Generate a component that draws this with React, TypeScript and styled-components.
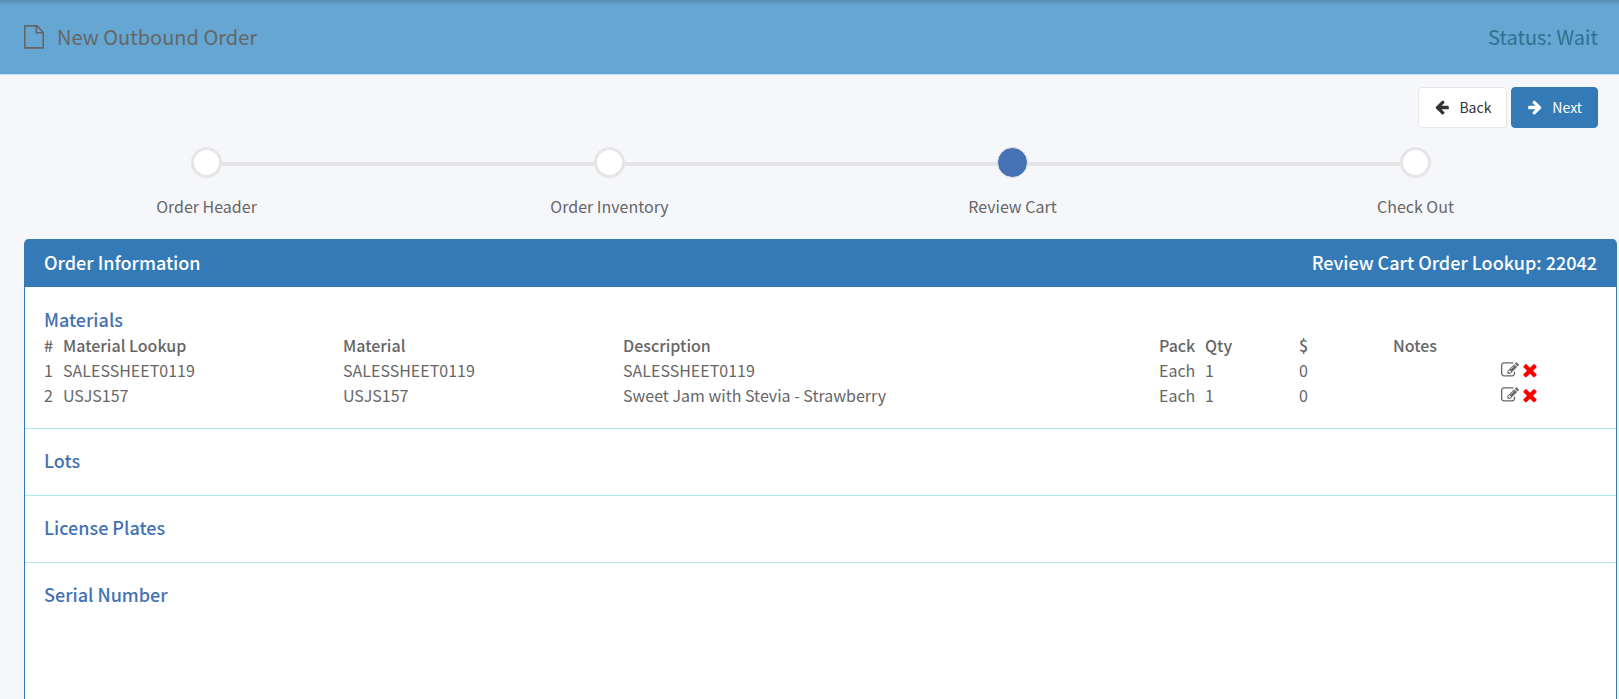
import React from 'react';
import styled, { createGlobalStyle } from 'styled-components';

const GlobalStyle = createGlobalStyle`
  * {
    box-sizing: border-box;
  }
  body {
    margin: 0;
    background: #f5f7fb;
    color: #666;
    font-family: 'Noto Sans CJK SC', 'Noto Sans', sans-serif;
    font-size: 16px;
    line-height: 25px;
  }
`;

const Page = styled.div`
  display: flex;
  flex-direction: column;
  min-height: 100vh;
  overflow: hidden;
`;

const Header = styled.header`
  display: flex;
  align-items: center;
  justify-content: space-between;
  padding: 22px 21px 22px 24px;
  background: #65a6d3;
  border-bottom: 1px solid #c8dcea;
  box-shadow: inset 0 6px 4px -4px rgba(0, 0, 0, 0.2);
`;

const Title = styled.h1`
  display: flex;
  align-items: center;
  gap: 13px;
  margin: 0;
  font-size: 20px;
  line-height: 30px;
  font-weight: 400;
`;

const Status = styled.p`
  margin: 0;
  font-size: 20px;
  line-height: 30px;
  color: #31708f;
`;

const Actions = styled.div`
  display: flex;
  justify-content: flex-end;
  gap: 4px;
  padding: 12px 21px 0 24px;
`;

const Button = styled.button<{ $primary?: boolean }>`
  display: flex;
  align-items: center;
  gap: 9px;
  padding: 9px 15px 10px;
  border: 1px solid ${(p) => (p.$primary ? '#337ab7' : '#e7e7e7')};
  border-radius: 4px;
  background: ${(p) => (p.$primary ? '#337ab7' : '#fff')};
  color: ${(p) => (p.$primary ? '#fff' : '#333')};
  font-family: inherit;
  font-size: 14px;
  line-height: 20px;
  cursor: pointer;
`;

const Steps = styled.ol`
  display: grid;
  grid-template-columns: repeat(4, 1fr);
  margin: 0;
  padding: 19px 2px 0 5px;
  list-style: none;
`;

const Step = styled.li`
  display: flex;
  flex-direction: column;
  gap: 16px;
  text-align: center;
`;

const Track = styled.div`
  display: flex;
  align-items: center;
`;

const Rail = styled.span<{ $hidden: boolean }>`
  flex: 1;
  height: 4px;
  margin-top: 2px;
  background: ${(p) => (p.$hidden ? 'transparent' : '#e5e5e5')};
`;

const Dot = styled.span<{ $active: boolean }>`
  width: 31px;
  height: 31px;
  border: ${(p) => (p.$active ? '1px' : '3px')} solid #e5e5e5;
  border-radius: 50%;
  background: ${(p) => (p.$active ? '#4472b4' : '#fff')};
`;

const Panel = styled.main`
  flex: 1;
  margin: 20px 2px 0 24px;
  border: 1px solid #337ab7;
  border-width: 0 1px;
  border-radius: 5px 5px 0 0;
  background: #fff;
`;

const PanelHeader = styled.div`
  display: flex;
  justify-content: space-between;
  padding: 11px 19px 12px;
  border-radius: 4px 4px 0 0;
  background: #337ab7;
  color: #fff;
`;

const PanelTitle = styled.h2`
  margin: 0;
  font-size: 18px;
  line-height: 25px;
  font-weight: 500;
`;

const Section = styled.section`
  padding: 19px 19px 20px;
  & + & {
    padding: 18px 19px 21px;
    border-top: 1px solid #b2e6ee;
  }
`;

const SectionTitle = styled.h3`
  margin: 0 0 1px;
  color: #4472b4;
  font-size: 18px;
  line-height: 26px;
  font-weight: 500;
`;

const Table = styled.table`
  width: 100%;
  table-layout: fixed;
  border-collapse: collapse;
`;

const Th = styled.th<{ $width?: number }>`
  width: ${(p) => (p.$width ? `${p.$width}px` : 'auto')};
  padding: 0;
  text-align: left;
  font-weight: 500;
`;

const Td = styled.td`
  height: 25px;
  padding: 0;
  white-space: nowrap;
`;

const RowActions = styled.div`
  display: flex;
  align-items: center;
  gap: 1px;
  padding-bottom: 2px;
`;

const IconButton = styled.button<{ $danger?: boolean }>`
  display: flex;
  padding: 0;
  border: 0;
  background: none;
  color: ${(p) => (p.$danger ? '#f00' : '#666')};
  cursor: pointer;
`;

const FileIcon = () => (
  <svg width="20" height="24" viewBox="0 0 20 24" fill="none" stroke="currentColor" strokeWidth="1.6" aria-hidden="true">
    <path d="M0.8 0.9H13L19.2 7.3V22.9H0.8Z M12.3 0.9V7.8H19.2" />
  </svg>
);

const Glyph = ({ d, size }: { d: string; size: number }) => (
  <svg width={size} height={size} viewBox="0 0 1792 1792" fill="currentColor" aria-hidden="true">
    <path d={d} />
  </svg>
);

const arrowLeft =
  'M1664 896v128q0 53-32.5 90.5t-84.5 37.5h-704l293 294q38 36 38 90t-38 90l-75 76q-37 37-90 37-52 0-91-37l-651-652q-37-37-37-90 0-52 37-91l651-650q38-38 91-38 52 0 90 38l75 74q38 38 38 91t-38 91l-293 293h704q52 0 84.5 37.5t32.5 90.5z';
const arrowRight =
  'M1600 960q0 54-37 91l-651 651q-39 37-91 37-51 0-90-37l-75-75q-38-38-38-91t38-91l293-293h-704q-52 0-84.5-37.5t-32.5-90.5v-128q0-53 32.5-90.5t84.5-37.5h704l-293-294q-38-36-38-90t38-90l75-75q38-38 90-38 53 0 91 38l651 651q37 35 37 90z';
const pencil =
  'M888 1184l116-116-152-152-116 116v56h96v96h56zm440-720q-16-16-33 1l-350 350q-17 17-1 33t33-1l350-350q17-17 1-33zm80 594v190q0 119-84.5 203.5t-203.5 84.5h-832q-119 0-203.5-84.5t-84.5-203.5v-832q0-119 84.5-203.5t203.5-84.5h832q63 0 117 25 15 7 18 23 3 17-9 29l-49 49q-14 14-32 8-23-6-45-6h-832q-66 0-113 47t-47 113v832q0 66 47 113t113 47h832q66 0 113-47t47-113v-126q0-13 9-22l64-64q15-15 35-7t20 29zm-96-738l288 288-672 672h-288v-288zm444 132l-92 92-288-288 92-92q28-28 68-28t68 28l152 152q28 28 28 68t-28 68z';
const cross =
  'M1490 1322q0 40-28 68l-136 136q-28 28-68 28t-68-28l-294-294-294 294q-28 28-68 28t-68-28l-136-136q-28-28-28-68t28-68l294-294-294-294q-28-28-28-68t28-68l136-136q28-28 68-28t68 28l294 294 294-294q28-28 68-28t68 28l136 136q28 28 28 68t-28 68l-294 294 294 294q28 28 28 68z';

const steps = ['Order Header', 'Order Inventory', 'Review Cart', 'Check Out'];
const currentStep = 2;

const materials = [
  { lookup: 'SALESSHEET0119', material: 'SALESSHEET0119', description: 'SALESSHEET0119', pack: 'Each', qty: 1, price: 0, notes: '' },
  { lookup: 'USJS157', material: 'USJS157', description: 'Sweet Jam with Stevia - Strawberry', pack: 'Each', qty: 1, price: 0, notes: '' },
];

export default function App() {
  return (
    <Page>
      <GlobalStyle />
      <Header>
        <Title>
          <FileIcon />
          New Outbound Order
        </Title>
        <Status>Status: Wait</Status>
      </Header>
      <Actions>
        <Button type="button">
          <Glyph d={arrowLeft} size={16} />
          Back
        </Button>
        <Button type="button" $primary>
          <Glyph d={arrowRight} size={16} />
          Next
        </Button>
      </Actions>
      <Steps>
        {steps.map((label, i) => (
          <Step key={label} aria-current={i === currentStep ? 'step' : undefined}>
            <Track>
              <Rail $hidden={i === 0} />
              <Dot $active={i === currentStep} />
              <Rail $hidden={i === steps.length - 1} />
            </Track>
            {label}
          </Step>
        ))}
      </Steps>
      <Panel>
        <PanelHeader>
          <PanelTitle>Order Information</PanelTitle>
          <PanelTitle>Review Cart Order Lookup: 22042</PanelTitle>
        </PanelHeader>
        <Section>
          <SectionTitle>Materials</SectionTitle>
          <Table>
            <thead>
              <tr>
                <Th $width={19}>#</Th>
                <Th $width={280}>Material Lookup</Th>
                <Th $width={280}>Material</Th>
                <Th>Description</Th>
                <Th $width={46}>Pack</Th>
                <Th $width={94}>Qty</Th>
                <Th $width={94}>$</Th>
                <Th $width={108}>Notes</Th>
                <Th $width={96} aria-label="Actions" />
              </tr>
            </thead>
            <tbody>
              {materials.map((m, i) => (
                <tr key={m.lookup}>
                  <Td>{i + 1}</Td>
                  <Td>{m.lookup}</Td>
                  <Td>{m.material}</Td>
                  <Td>{m.description}</Td>
                  <Td>{m.pack}</Td>
                  <Td>{m.qty}</Td>
                  <Td>{m.price}</Td>
                  <Td>{m.notes}</Td>
                  <Td>
                    <RowActions>
                      <IconButton type="button" aria-label={`Edit ${m.lookup}`}>
                        <Glyph d={pencil} size={18} />
                      </IconButton>
                      <IconButton type="button" $danger aria-label={`Remove ${m.lookup}`}>
                        <Glyph d={cross} size={20} />
                      </IconButton>
                    </RowActions>
                  </Td>
                </tr>
              ))}
            </tbody>
          </Table>
        </Section>
        <Section>
          <SectionTitle>Lots</SectionTitle>
        </Section>
        <Section>
          <SectionTitle>License Plates</SectionTitle>
        </Section>
        <Section>
          <SectionTitle>Serial Number</SectionTitle>
        </Section>
      </Panel>
    </Page>
  );
}
